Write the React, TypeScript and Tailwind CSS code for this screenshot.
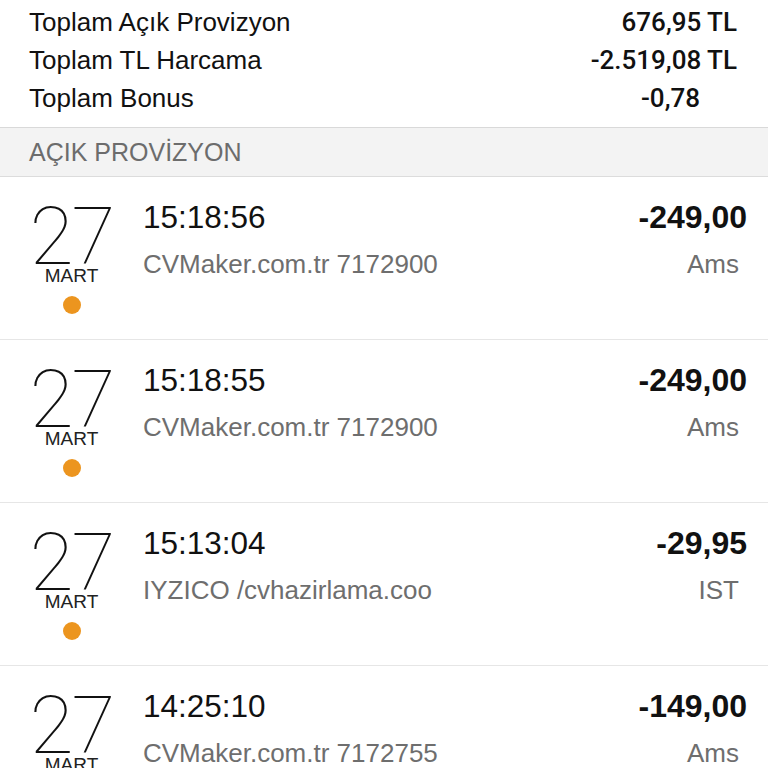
const summary = [
  { label: "Toplam Açık Provizyon", value: "676,95 TL", pad: false },
  { label: "Toplam TL Harcama", value: "-2.519,08 TL", pad: false },
  { label: "Toplam Bonus", value: "-0,78", pad: true },
]

const items = [
  { day: "27", month: "MART", time: "15:18:56", desc: "CVMaker.com.tr 7172900", amount: "-249,00", city: "Ams" },
  { day: "27", month: "MART", time: "15:18:55", desc: "CVMaker.com.tr 7172900", amount: "-249,00", city: "Ams" },
  { day: "27", month: "MART", time: "15:13:04", desc: "IYZICO /cvhazirlama.coo", amount: "-29,95", city: "IST" },
  { day: "27", month: "MART", time: "14:25:10", desc: "CVMaker.com.tr 7172755", amount: "-149,00", city: "Ams" },
]

export default function App() {
  return (
    <div className="w-[768px] h-[768px] overflow-hidden bg-white font-['Liberation_Sans',Arial,sans-serif]">
      <div className="h-[128px] border-b border-[#d9d9d9] pt-[3px] pl-[29px] pr-[31px]">
        {summary.map((row) => (
          <div key={row.label} className="flex items-center justify-between h-[38px] text-[26px] text-[#111]">
            <span>{row.label}</span>
            <span className={`font-['Roboto',sans-serif] font-medium ${row.pad ? "pr-[37px]" : ""}`}>{row.value}</span>
          </div>
        ))}
      </div>
      <div className="h-[49px] bg-[#f3f3f3] border-b border-[#dcdcdc] flex items-center pl-[29px] text-[25px] text-[#6c6c6c] pt-[2px]">
        AÇIK PROVİZYON
      </div>
      {items.map((it, i) => (
        <div key={i} className="h-[163px] border-b border-[#e6e6e6] flex pt-[20px] pr-[21px]">
          <div className="w-[114px] pl-[29px] pt-[11px] flex flex-col items-center">
            <div className="font-['Roboto',sans-serif] font-thin text-[80px] leading-[58px] text-[#111] tracking-[-2px]">{it.day}</div>
            <div className="text-[19px] leading-[20px] text-[#222]">{it.month}</div>
            <div className="w-[18px] h-[18px] rounded-full bg-[#ec951f] mt-[10px]"></div>
          </div>
          <div className="flex-1 pl-[29px]">
            <div className="text-[31.5px] leading-[40px] text-[#111]">{it.time}</div>
            <div className="text-[26px] leading-[30px] text-[#6e6e6e] mt-[12px]">{it.desc}</div>
          </div>
          <div className="flex flex-col items-end">
            <div className="text-[32px] leading-[40px] font-bold text-[#111]">{it.amount}</div>
            <div className="text-[26px] leading-[30px] text-[#6e6e6e] mt-[12px] pr-[8px]">{it.city}</div>
          </div>
        </div>
      ))}
    </div>
  )
}
